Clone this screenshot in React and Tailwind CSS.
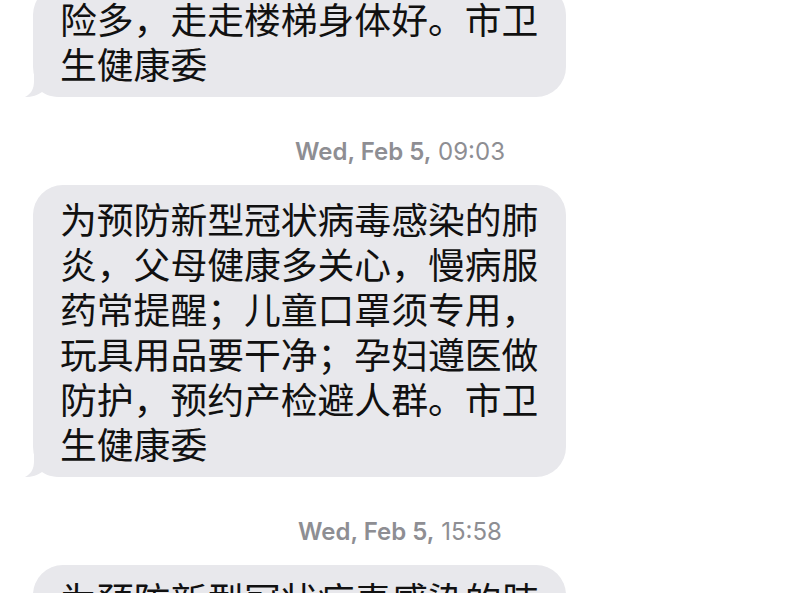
const messages = [
  {
    time: null,
    lines: ["险多，走走楼梯身体好。市卫", "生健康委"],
  },
  {
    time: ["Wed, Feb 5,", "09:03"],
    lines: [
      "为预防新型冠状病毒感染的肺",
      "炎，父母健康多关心，慢病服",
      "药常提醒；儿童口罩须专用，",
      "玩具用品要干净；孕妇遵医做",
      "防护，预约产检避人群。市卫",
      "生健康委",
    ],
  },
  {
    time: ["Wed, Feb 5,", "15:58"],
    lines: [
      "为预防新型冠状病毒感染的肺",
      "炎，父母健康多关心，慢病服",
    ],
  },
];

const Tail = () => (
  <svg
    className="absolute left-[-11px] bottom-0 h-[30px] w-[40px] text-[#e8e8ec]"
    viewBox="0 0 40 30"
    fill="currentColor"
  >
    <path d="M12 0 L12 14 C12 22 9 27 3 30 C10 30 16 28 20 25 C24 28 30 30 40 30 L40 0 Z" />
  </svg>
);

const Timestamp = ({ time }) => (
  <div className="mt-[43px] mb-[21px] text-center text-[24px] leading-[24px] text-[#8e8e93] font-['Inter','Liberation_Sans',sans-serif]">
    <span className="font-semibold">{time[0]}</span> {time[1]}
  </div>
);

const Bubble = ({ lines }) => (
  <div className="relative ml-[33px] w-[533px] rounded-[30px] bg-[#e8e8ec] px-[27px] py-[11px] text-[36.8px] leading-[45px] text-[#111]">
    <Tail />
    <div className="relative">
      {lines.map((l, i) => (
        <div key={i} className="whitespace-nowrap">
          {l}
        </div>
      ))}
    </div>
  </div>
);

export default function App() {
  return (
    <div className="relative h-[593px] w-[800px] overflow-hidden bg-white font-['Noto_Sans_CJK_SC','Noto_Sans',sans-serif]">
      <div className="flex flex-col mt-[-15px]">
        {messages.map((m, i) => (
          <div key={i} className="flex flex-col">
            {m.time && <Timestamp time={m.time} />}
            <Bubble lines={m.lines} />
          </div>
        ))}
      </div>
    </div>
  );
}
